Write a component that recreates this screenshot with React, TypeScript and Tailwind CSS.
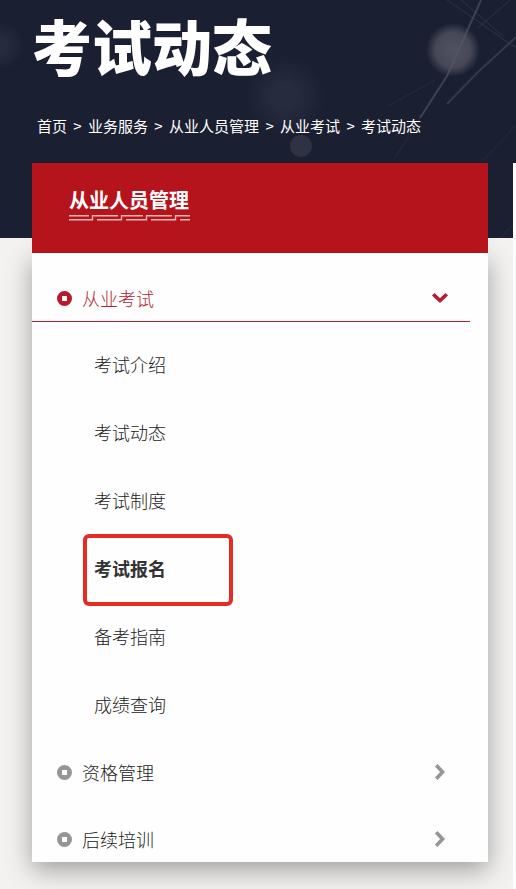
import { useState } from "react";

const crumbs = ["首页", "业务服务", "从业人员管理", "从业考试"];

const examLinks = ["考试介绍", "考试动态", "考试制度", "考试报名", "备考指南", "成绩查询"];

function HeroArtwork() {
  return (
    <svg
      className="absolute inset-0 w-full h-full"
      viewBox="0 0 516 238"
      preserveAspectRatio="xMaxYMin slice"
      aria-hidden="true"
    >
      <defs>
        <radialGradient id="orb">
          <stop offset="0" stopColor="#505260" />
          <stop offset="0.65" stopColor="#464857" />
          <stop offset="1" stopColor="#464857" stopOpacity="0" />
        </radialGradient>
        <radialGradient id="haze">
          <stop offset="0.3" stopColor="#272b3e" />
          <stop offset="1" stopColor="#272b3e" stopOpacity="0" />
        </radialGradient>
      </defs>
      <circle cx="285" cy="96" r="40" fill="url(#haze)" />
      <circle cx="0" cy="46" r="24" fill="url(#haze)" />
      <circle cx="301" cy="146" r="11" fill="#2f3243" />
      <circle cx="453" cy="50" r="27" fill="url(#orb)" />
      <g fill="none" stroke="#55586a">
        <path d="M481 0L468 29L447 76L420 118" strokeWidth="2" opacity="0.6" />
        <path d="M516 37L478 72L447 104" strokeWidth="2" opacity="0.45" />
        <path d="M447 0L516 48M461 0L503 36M510 0L478 28" opacity="0.35" />
        <path d="M435 80L388 106M516 125L482 162M420 118L395 158M516 222L500 238" opacity="0.2" />
      </g>
    </svg>
  );
}

function CoinIcon({ className }: { className: string }) {
  return (
    <svg className={className} width="15" height="15" viewBox="0 0 15 15" aria-hidden="true">
      <path
        fill="currentColor"
        fillRule="evenodd"
        d="M7.5 0a7.5 7.5 0 1 1 0 15a7.5 7.5 0 1 1 0-15zM5 5v5h5V5z"
      />
    </svg>
  );
}

function ArrowIcon({ open }: { open: boolean }) {
  return (
    <svg
      className={open ? "text-[#b4202f]" : "text-[#969696]"}
      width="18"
      height="18"
      viewBox="0 0 18 18"
      fill="none"
      stroke="currentColor"
      strokeWidth="3.6"
      aria-hidden="true"
    >
      <path d={open ? "M2.2 5.2L9 11.6L15.8 5.2" : "M5.2 2.2L11.6 9L5.2 15.8"} />
    </svg>
  );
}

function TitleRule() {
  return (
    <svg
      width="121"
      height="6"
      viewBox="0 0 121 6"
      fill="none"
      stroke="#f0b4b5"
      strokeWidth="1.4"
      aria-hidden="true"
    >
      <path d="M0 .7H20M0 4.7H23.5V.7H49M28 4.7H52.5V.7H74M57 4.7H77.5V.7H103M82 4.7H106.5V.7H121M111 4.7H121" />
    </svg>
  );
}

function SectionButton({ label, open, onClick }: { label: string; open: boolean; onClick: () => void }) {
  return (
    <div className={open ? "border-b border-b-[#b4202f]" : ""}>
      <button
        type="button"
        aria-expanded={open}
        onClick={onClick}
        className={
          open
            ? "flex h-[46px] w-full items-center pl-[25px] pr-[21px] text-[#b4202f]"
            : "flex h-[46px] w-full items-center pl-[25px] pr-[21px] text-[#222222]"
        }
      >
        <CoinIcon className={open ? "text-[#b9192b]" : "text-[#969696]"} />
        <span className="ml-[10px] flex-1 text-left">{label}</span>
        <ArrowIcon open={open} />
      </button>
    </div>
  );
}

export default function App() {
  const [open, setOpen] = useState("从业考试");
  const toggle = (name: string) => setOpen(open === name ? "" : name);

  return (
    <div className="flex min-h-screen flex-col bg-[#f3f2f1] font-['Noto_Sans_CJK_SC',sans-serif]">
      <header className="relative bg-[#1b1f32] px-8 pb-[100px] text-white">
        <HeroArtwork />
        <h1 className="relative pt-[10px] text-[60px] leading-[70px] font-black">考试动态</h1>
        <nav aria-label="breadcrumb" className="relative mt-[34px] pl-[5px] text-[15px] leading-6">
          <ol className="flex whitespace-nowrap">
            {crumbs.map((name) => (
              <li key={name} className="flex">
                <a href="#">{name}</a>
                <span className="w-[21px] text-center">&gt;</span>
              </li>
            ))}
            <li aria-current="page">考试动态</li>
          </ol>
        </nav>
      </header>

      <main className="relative -mt-[75px] flex flex-1 items-start pl-8">
        <aside className="flex-1">
          <div className="relative z-10 h-[90px] bg-[#b6141d] pl-[37px] pt-[22px] text-white">
            <h2 className="text-[20px] leading-[30px] font-bold">从业人员管理</h2>
            <TitleRule />
          </div>
          <div className="bg-[#fefefe] pt-[22px] text-[18px] font-light shadow-[0_8px_24px_rgba(0,0,0,0.35)]">
            <div className="pr-[18px]">
              <SectionButton label="从业考试" open={open === "从业考试"} onClick={() => toggle("从业考试")} />
            </div>
            {open === "从业考试" && (
              <ul className="pt-2 pb-[11px]">
                {examLinks.map((name) => {
                  const active = name === "考试报名";
                  return (
                    <li key={name} className="relative flex h-[68px] items-center pl-[62px] text-[#222222]">
                      {active && (
                        <span className="pointer-events-none absolute top-0 left-[51px] h-[72px] w-[150px] rounded-md border-4 border-[#e42b24]" />
                      )}
                      <a href="#" className={active ? "font-bold text-[#333333]" : ""}>
                        {name}
                      </a>
                    </li>
                  );
                })}
              </ul>
            )}
            <div className="flex flex-col gap-[21px] pr-[18px]">
              {["资格管理", "后续培训"].map((name) => (
                <SectionButton key={name} label={name} open={open === name} onClick={() => toggle(name)} />
              ))}
            </div>
          </div>
        </aside>
        <div className="ml-[25px] w-[3px] self-stretch bg-[#fdfdfd]" />
      </main>
    </div>
  );
}
